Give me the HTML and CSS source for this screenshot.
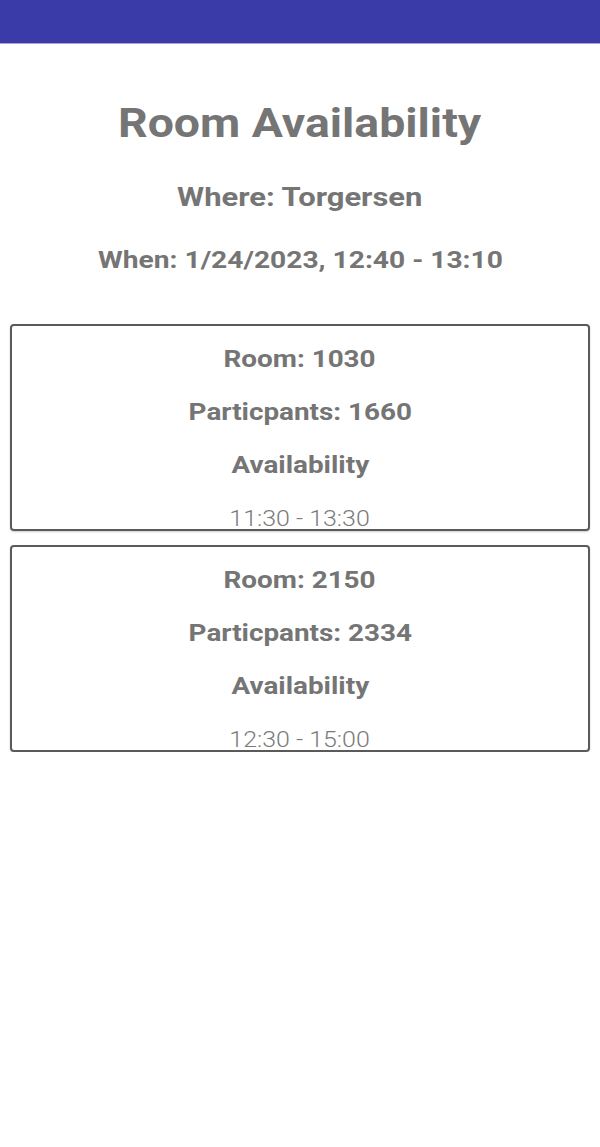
FILE: index.html
```html
<!DOCTYPE html>
<html lang="en">
<head>
    <meta charset="UTF-8">
    <meta name="viewport" content="width=device-width, initial-scale=1.0">
    <title>Room Availability</title>
    <link rel="stylesheet" href="styles.css">
</head>
<body>

<div class="app-bar"></div>

<div class="container">
    <h1 class="title">Room Availability</h1>
    <p class="where">Where: Torgersen</p>
    <p class="when">When: 1/24/2023, 12:40 - 13:10</p>

    <div class="room-list">
        <div class="room-card">
            <p class="room-line">Room: 1030</p>
            <p class="room-line">Particpants: 1660</p>
            <p class="room-line">Availability</p>
            <p class="room-time">11:30 - 13:30</p>
        </div>
        <div class="room-card">
            <p class="room-line">Room: 2150</p>
            <p class="room-line">Particpants: 2334</p>
            <p class="room-line">Availability</p>
            <p class="room-time">12:30 - 15:00</p>
        </div>
    </div>
</div>

</body>
</html>
```

FILE: styles.css
```css
body {
    font-family: Roboto, "Noto Sans", sans-serif;
    margin: 0;
    background-color: #fff;
    color: #757575;
}
.app-bar {
    height: 43px;
    background-color: #3b3aa9;
    border-bottom: 1px solid #aba6da;
}
.container {
    padding: 0 10px;
}
/* text on the device is a little wider than Roboto, so stretch it */
.title, .where, .when, .room-line, .room-time {
    width: fit-content;
    margin: 0 auto;
    text-align: center;
    transform: scaleX(1.16);
}
.title {
    margin-top: 56px;
    font-size: 40px;
    line-height: 48px;
    font-weight: bold;
}
.where {
    margin-top: 33px;
    font-size: 26.7px;
    line-height: 32px;
    font-weight: bold;
}
.when {
    margin-top: 31px;
    font-size: 24.3px;
    line-height: 32px;
    font-weight: bold;
}
.room-list {
    margin-top: 48px;
    display: flex;
    flex-direction: column;
    gap: 14px;
}
.room-card {
    box-sizing: border-box;
    height: 207px;
    padding-top: 7px;
    border: 2px solid #5a5a5a;
    border-radius: 4px;
    box-shadow: 0 1px 2px rgba(0, 0, 0, 0.2);
}
.room-line {
    font-size: 24px;
    line-height: 53px;
    font-weight: bold;
}
.room-time {
    font-size: 21.5px;
    line-height: 53px;
    font-weight: 300;
    color: #7a7a7a;
}
```
